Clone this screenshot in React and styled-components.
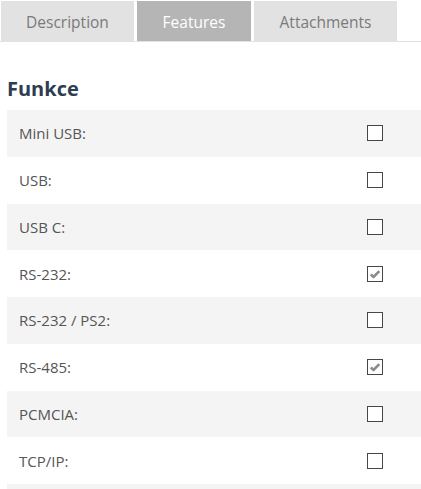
import React from "react";
import styled, { createGlobalStyle } from "styled-components";

const Global = createGlobalStyle`
  html, body { margin: 0; padding: 0; background: #fff; overflow: hidden; }
  body { font-family: "Open Sans", "Liberation Sans", sans-serif; }
`;

const Page = styled.div`
  width: 421px;
  padding-top: 1px;
`;

const TabBar = styled.div`
  display: flex;
  gap: 3px;
  padding-left: 1px;
  border-bottom: 1px solid #e2e2e2;
`;

const Tab = styled.div`
  height: 40px;
  box-sizing: border-box;
  padding-top: 2px;
  display: flex;
  align-items: center;
  justify-content: center;
  width: ${(p) => p.$w}px;
  font-size: 15.5px;
  color: ${(p) => (p.$active ? "#ffffff" : "#7a7a7a")};
  background: ${(p) => (p.$active ? "#b5b5b5" : "#e2e2e2")};
`;

const Section = styled.div`
  padding: 33px 0 0 7px;
`;

const Heading = styled.h3`
  margin: 0 0 8px 0;
  font-size: 20px;
  line-height: 27px;
  font-weight: 700;
  color: #2e3d4f;
`;

const Table = styled.div`
  display: flex;
  flex-direction: column;
`;

const Row = styled.div`
  height: 46.75px;
  display: flex;
  align-items: center;
  justify-content: space-between;
  padding: 0 38px 0 12px;
  background: ${(p) => (p.$odd ? "#f4f4f4" : "#ffffff")};
`;

const Label = styled.span`
  font-size: 15px;
  color: #555555;
`;

const Box = styled.span`
  width: 14px;
  height: 14px;
  border: 1.5px solid #474747;
  background: #fff;
  display: flex;
  align-items: center;
  justify-content: center;
`;

const Check = () => (
  <svg width="12" height="10" viewBox="0 0 12 10">
    <path d="M1.8 5.4 L4.5 8 L10.3 2.2" fill="none" stroke="#8c8c8c" strokeWidth="2.6" strokeLinejoin="round" />
  </svg>
);

const rows = [
  ["Mini USB:", false],
  ["USB:", false],
  ["USB C:", false],
  ["RS-232:", true],
  ["RS-232 / PS2:", false],
  ["RS-485:", true],
  ["PCMCIA:", false],
  ["TCP/IP:", false],
  ["", false],
];

export default function App() {
  return (
    <Page>
      <Global />
      <TabBar>
        <Tab $w={133}>Description</Tab>
        <Tab $w={114} $active>Features</Tab>
        <Tab $w={143}>Attachments</Tab>
      </TabBar>
      <Section>
        <Heading>Funkce</Heading>
        <Table>
          {rows.map(([label, checked], i) => (
            <Row key={i} $odd={i % 2 === 0}>
              <Label>{label}</Label>
              {label && <Box>{checked && <Check />}</Box>}
            </Row>
          ))}
        </Table>
      </Section>
    </Page>
  );
}
